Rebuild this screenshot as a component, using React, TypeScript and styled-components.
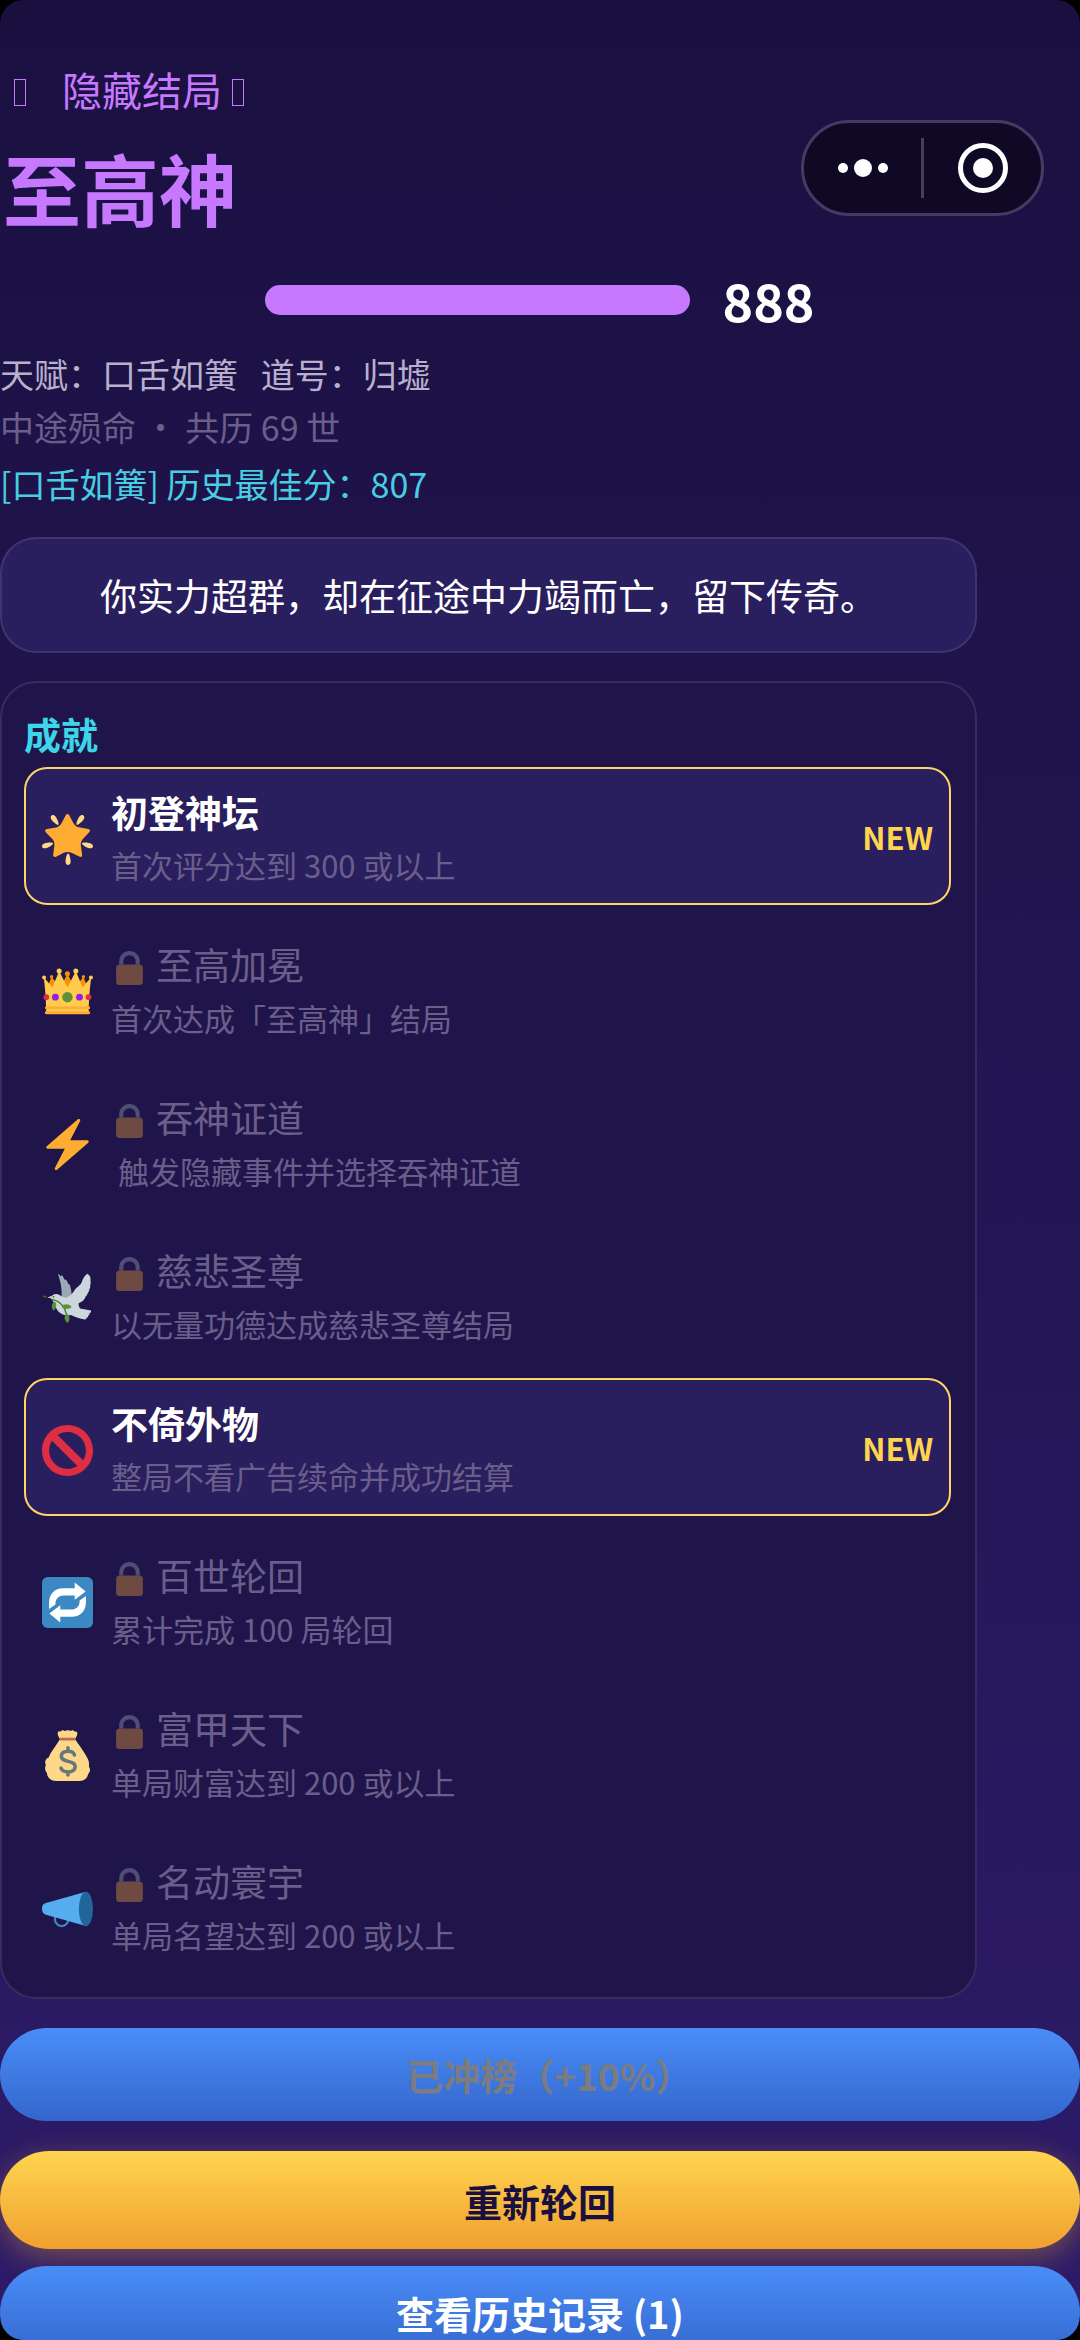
import React from "react";
import styled, { createGlobalStyle, css } from "styled-components";

const GlobalStyle = createGlobalStyle`
  *, *::before, *::after { box-sizing: border-box; }
  html, body { margin: 0; background: #000; }
  body, button {
    font-family: "Noto Sans CJK SC", "Noto Sans", sans-serif;
  }
`;

const Screen = styled.div`
  position: relative;
  height: 100vh;
  overflow: hidden;
  border-radius: 24px;
  background: linear-gradient(180deg, #1a1040 0%, #2d1b69 100%);
  color: #fff;
`;

const Scroller = styled.main`
  height: 100%;
  overflow-y: auto;
  scrollbar-width: none;
  padding-top: 59px;
`;

const Capsule = styled.div`
  position: absolute;
  z-index: 2;
  top: 120px;
  right: 36px;
  display: flex;
  align-items: center;
  width: 243px;
  height: 96px;
  border: 3px solid #453b62;
  border-radius: 48px;
  background: #0f0926;
`;

const CapsuleButton = styled.button`
  flex: 1;
  display: flex;
  align-items: center;
  justify-content: center;
  height: 100%;
  padding: 0;
  border: 0;
  background: none;
`;

const CapsuleDivider = styled.span`
  width: 3px;
  height: 60px;
  background: #453f5a;
`;

const EndingKind = styled.p`
  display: flex;
  align-items: baseline;
  margin: 0;
  padding-left: 14px;
  color: #c678ff;
  font-size: 40px;
  line-height: 60px;
`;

const KindLabel = styled.span`
  padding: 0 10px 0 36px;
`;

const Ornament = styled.span`
  width: 12px;
  height: 27px;
  border: 1px solid currentColor;
`;

const EndingName = styled.h1`
  margin: 0;
  padding-left: 3px;
  color: #c678ff;
  font-size: 78px;
  font-weight: 700;
  line-height: 136px;
`;

const ScoreRow = styled.div`
  display: flex;
  align-items: center;
  justify-content: center;
  gap: 32px;
  margin: 7px 0 9px;
`;

const ScoreBar = styled.div`
  width: 425px;
  height: 30px;
  border-radius: 15px;
  background: #c678ff;
`;

const ScoreValue = styled.strong`
  font-size: 52px;
  line-height: 76px;
`;

const Detail = styled.p<{ $color: string }>`
  margin: 0;
  color: ${(p) => p.$color};
  font-size: 34px;
  line-height: 53px;
  white-space: pre-wrap;
`;

const BestScore = styled(Detail)`
  margin-top: 4px;
`;

const panel = css`
  margin-right: 103px;
  border: 2px solid rgba(255, 255, 255, 0.1);
  border-radius: 36px;
`;

const Summary = styled.p`
  ${panel}
  margin-top: 27px;
  margin-bottom: 28px;
  padding: 28px 22px;
  background: #2a1f5e;
  font-size: 37px;
  line-height: 56px;
  text-align: center;
`;

const Achievements = styled.section`
  ${panel}
  padding: 24px 24px 22px 22px;
  background: #20154b;
`;

const SectionTitle = styled.h2`
  margin: 0 0 6px;
  color: #3dd5ea;
  font-size: 37px;
  font-weight: 700;
  line-height: 54px;
`;

const List = styled.ul`
  display: flex;
  flex-direction: column;
  gap: 14px;
  margin: 0;
  padding: 0;
  list-style: none;
`;

const Item = styled.li<{ $unlocked: boolean }>`
  display: flex;
  align-items: center;
  gap: 18px;
  padding: 14px 16px;
  border: 2px solid ${(p) => (p.$unlocked ? "#ffd666" : "transparent")};
  border-radius: 23px;
  background: ${(p) => (p.$unlocked ? "#2a1f5e" : "transparent")};
`;

const Emoji = styled.svg`
  flex: none;
  width: 51px;
  height: 51px;
  margin-top: 6px;
`;

const ItemBody = styled.div`
  flex: 1;
`;

const ItemTitle = styled.h3<{ $unlocked: boolean }>`
  display: flex;
  align-items: center;
  gap: 8px;
  margin: 0;
  color: ${(p) => (p.$unlocked ? "#fff" : "#6a5e8a")};
  font-size: 37px;
  font-weight: ${(p) => (p.$unlocked ? 700 : 400)};
  line-height: ${(p) => (p.$unlocked ? 58 : 59)}px;
`;

const LockIcon = styled.svg`
  width: 37px;
  height: 37px;
  margin-top: 4px;
  opacity: 0.35;
`;

const ItemText = styled.p`
  margin: 0;
  color: #6a5e8a;
  font-size: 31px;
  line-height: 48px;
  white-space: pre-wrap;
`;

const NewTag = styled.span`
  color: #ffd54f;
  font-size: 31px;
  font-weight: 700;
`;

const Actions = styled.div`
  display: flex;
  flex-direction: column;
  padding: 29px 0 40px;
`;

const BlueButton = styled.button`
  height: 93px;
  border: 0;
  border-radius: 47px;
  background: linear-gradient(180deg, #4a8df8 0%, #3366cc 100%);
  color: #fff;
  font-size: 38px;
  font-weight: 700;
  z-index: 1;

  &:disabled {
    color: #7c7c80;
    font-size: 37px;
  }
`;

/* Drops the blank half of a full-width closing mark so the label centres on its ink. */
const ClosingMark = styled.span`
  font-feature-settings: "halt";
`;

const GoldButton = styled.button`
  height: 98px;
  margin: 30px 0 17px;
  border: 0;
  border-radius: 49px;
  background: linear-gradient(180deg, #ffd54f 0%, #f0a030 100%);
  box-shadow: 0 8px 30px rgba(255, 180, 50, 0.35);
  color: #1a1040;
  font-size: 38px;
  font-weight: 700;
`;

type IconName = "star" | "crown" | "bolt" | "dove" | "ban" | "repeat" | "money" | "horn";

const repeatArrow =
  "M23.1 3.8L30.8 10.2L23.1 16V13H15.4C12 13 9.5 15.4 9.5 18.6V19.4L5 22.6V18.2C5 12 9 8 14.8 8H23.1Z";

const drawings: Record<IconName, React.ReactNode> = {
  star: (
    <>
      <path fill="#FFAC33" d="M28.84 17.638c-.987 1.044-1.633 3.067-1.438 4.493l.892 6.441c.197 1.427-.701 2.087-1.996 1.469l-5.851-2.796c-1.295-.62-3.408-.611-4.7.018l-5.826 2.842c-1.291.629-2.193-.026-2.007-1.452l.843-6.449c.186-1.427-.475-3.444-1.47-4.481l-4.494-4.688c-.996-1.037-.655-2.102.755-2.365l6.37-1.188c1.41-.263 3.116-1.518 3.793-2.789L16.762.956c.675-1.271 1.789-1.274 2.473-.009L22.33 6.66c.686 1.265 2.4 2.507 3.814 2.758l6.378 1.141c1.412.252 1.761 1.314.774 2.359l-4.456 4.72z" />
      <path fill="#FFD983" d="M9.783 2.181c1.023 1.413 2.446 4.917 1.717 5.447-.728.531-3.607-1.91-4.63-3.323-1.022-1.413-.935-2.668-.131-3.254.804-.587 2.02-.282 3.044 1.13zm19.348 2.124C28.109 5.718 25.23 8.16 24.5 7.627c-.729-.53.695-4.033 1.719-5.445C27.242.768 28.457.463 29.262 1.051c.803.586.89 1.841-.131 3.254zM16.625 33.291c-.001-1.746.898-5.421 1.801-5.421.897 0 1.798 3.675 1.797 5.42 0 1.747-.804 2.712-1.8 2.71-.994.002-1.798-.962-1.798-2.709zm16.179-9.262c-1.655-.539-4.858-2.533-4.579-3.395.277-.858 4.037-.581 5.69-.041 1.655.54 2.321 1.605 2.013 2.556-.308.95-1.469 1.42-3.124.88zM2.083 20.594c1.655-.54 5.414-.817 5.694.044.276.857-2.928 2.854-4.581 3.392-1.654.54-2.818.07-3.123-.88-.308-.95.354-2.015 2.01-2.556z" />
    </>
  ),
  crown: (
    <>
      <path fill="#F4900C" d="M14.174 17.075L6.75 7.594l-3.722 9.481zM17.938 5.534l-6.563 12.389H24.5zM21.826 17.075l7.424-9.481 3.722 9.481z" />
      <path fill="#FFCC4D" d="M28.669 15.19L23.887 3.523l-5.88 11.668-.007.003-.007-.004-5.88-11.668L7.331 15.19C4.197 10.833 1.28 8.042 1.28 8.042S3 20.75 3 33h30c0-12.25 1.72-24.958 1.72-24.958s-2.917 2.791-6.051 7.148z" />
      <circle fill="#5C913B" cx="17.957" cy="22" r="3.688" />
      <circle fill="#981CEB" cx="26.463" cy="22" r="2.412" />
      <circle fill="#DD2E44" cx="32.852" cy="22" r="1.986" />
      <circle fill="#981CEB" cx="9.45" cy="22" r="2.412" />
      <circle fill="#DD2E44" cx="3.061" cy="22" r="1.986" />
      <path fill="#FFAC33" d="M33 34H3c-.552 0-1-.447-1-1s.448-1 1-1h30c.553 0 1 .447 1 1s-.447 1-1 1zm0-3.486H3c-.552 0-1-.447-1-1s.448-1 1-1h30c.553 0 1 .447 1 1s-.447 1-1 1z" />
      <circle fill="#FFCC4D" cx="1.447" cy="8.042" r="1.407" />
      <circle fill="#F4900C" cx="6.75" cy="7.594" r="1.192" />
      <circle fill="#FFCC4D" cx="12.113" cy="3.523" r="1.784" />
      <circle fill="#FFCC4D" cx="34.553" cy="8.042" r="1.407" />
      <circle fill="#F4900C" cx="29.25" cy="7.594" r="1.192" />
      <circle fill="#FFCC4D" cx="23.887" cy="3.523" r="1.784" />
      <circle fill="#F4900C" cx="17.938" cy="5.534" r="1.784" />
    </>
  ),
  bolt: (
    <path fill="#FFAC33" d="M32.938 15.651C32.792 15.26 32.418 15 32 15H19.925L26.89 1.458c.219-.426.106-.947-.271-1.243C26.437.071 26.218 0 26 0c-.233 0-.466.082-.653.243L18 6.588 3.347 19.243c-.316.273-.43.714-.284 1.105S3.582 21 4 21h12.075L9.11 34.542c-.219.426-.106.947.271 1.243.182.144.401.215.619.215.233 0 .466-.082.653-.243L18 29.412l14.653-12.655c.317-.273.43-.714.285-1.106z" />
  ),
  dove: (
    <>
      <path fill="#99AAB5" d="M11.2 1.2c1 .3 1.6 1.2 2 2 .4-.6.7-1 1-.8 1 1 1.3 2 1.6 3 .5-.3 1-.2 1.3.3.8 1 1.2 1.9 1.4 2.8.6 0 1 .4 1.3 1 .8 2.5 1.2 5 1 7.5L20 20h-5.500c-.8-2.500-.6-4.500-.7-7-.2-4.500-1.400-8-2.600-11.800z" />
      <path fill="#CCD6DD" d="M32.200 1.300c1.700 1.200 2.400 3 2 5 .3 1 .2 2-.2 2.900.2 1.100 0 2.100-.6 3 0 1.100-.4 2-1.100 2.700-.2 1.100-.7 1.900-1.500 2.400-.7 2.400-2.500 3.900-4.900 4.700-.2 1.200.2 2.700 1 3.700l7.700 1.500c.2 1.100-.3 1.700-1.200 2 .4.900.1 1.400-.9 1.600.3.900-.1 1.400-1.100 1.400.1 1-.4 1.500-1.300 1.400-3.400-.5-6.500-1.800-9.700-3.200-3.100.7-6.500-.3-8.700-2.400-2-2-2.700-5.500-4.500-8.500-.7-1.100-1.600-1.300-3.200-1.400 1-.8 1.800-1 2.800-1 .8-1.300 2.200-1.800 3.700-1.600 2.300.4 3.600 2.300 6.200 2.700 2.400-.5 3.900-2.200 5.600-4.300 1.700-3 3.600-3.600 5.200-5.600C28.800 6.200 29 3 32.200 1.300z" />
      <path fill="none" stroke="#3E721D" strokeWidth="0.9" strokeLinecap="round" d="M1 17l2 .8M7 19.300c4 .8 7.500 3.200 9 7l1.500 4" />
      <path fill="#5C913B" d="M9 20.800c1.700 2 1.400 4.800-.8 6.400-1.700-1.800-2-4.500.8-6.400zM13.800 24.500c2-2.400 5.300-2.300 7.200.2-2.200 1.900-5.200 1.900-7.200-.2zM17.300 29c2.500 2 2.700 4.600.9 7-2.400-1.400-3.100-4.400-.9-7z" />
      <circle fill="#3E721D" cx="8.200" cy="17.500" r="0.600" />
    </>
  ),
  ban: (
    <path fill="#DD2E44" d="M18 0C8.059 0 0 8.059 0 18s8.059 18 18 18 18-8.059 18-18S27.941 0 18 0zm13 18c0 2.565-.753 4.950-2.035 6.965L11.036 7.036C13.050 5.753 15.435 5 18 5c7.180 0 13 5.821 13 13zM5 18c0-2.565.753-4.950 2.036-6.964l17.929 17.929C22.950 30.247 20.565 31 18 31c-7.179 0-13-5.820-13-13z" />
  ),
  repeat: (
    <>
      <rect fill="#3B88C3" width="36" height="36" rx="4" />
      <path fill="#fff" d={repeatArrow} />
      <path fill="#fff" transform="rotate(180 18 18)" d={repeatArrow} />
    </>
  ),
  money: (
    <>
      <path fill="#FDD888" d="M31.900 19.600c-1.500-3-4.300-7-7-10.800L23.300 6.500l1.200-2.300c1-2.200.2-3.800-1.400-3-.7-1.300-2-1.400-2.800-.5-.8-.8-3.200-.8-4.300 0-1-.9-2.400-.6-2.800.5-1.700-.8-2.700.5-1.800 2.800l1.300 2.500-1.400 2.200C8.600 12.800 6 16 4.700 19.400c-2.300.7-3 3.300-2 5.200-.8 2-.7 4 .7 5.500.4 3.500 2.800 5.900 6.500 5.900h16.400c3.400 0 5.600-1.800 6.200-4.800 1.600-1.600 1.800-3.700.6-5.500.3-2.300-.1-4.300-1.200-6.100z" />
      <rect fill="#BF6952" x="12.400" y="5.400" width="11.400" height="2" rx="1" />
      <path fill="none" stroke="#67757F" strokeWidth="2.500" strokeLinecap="round" strokeLinejoin="round" d="M18.300 12.500v2.500M18.300 29.500v2.200M22.900 17.600C22.400 15.800 20.500 15 18.300 15c-2.800 0-4.700 1.300-4.700 3.400 0 5 9.800 2.500 9.800 7.500 0 2.300-2.100 3.700-4.900 3.700-2.600 0-4.600-1-5.100-2.700" />
    </>
  ),
  horn: (
    <>
      <circle fill="none" stroke="#3B88C3" strokeWidth="1.500" cx="13.900" cy="25.600" r="4.800" />
      <path fill="#55ACEE" d="M31 6.200L2.200 14.300C.8 14.700 0 16 0 18s.8 3.700 2.200 4.200L31 30.400z" />
      <ellipse fill="#226699" cx="31" cy="18.300" rx="5" ry="12.200" />
    </>
  ),
};

interface Achievement {
  icon: IconName;
  title: string;
  text: string;
  unlocked: boolean;
}

const achievements: Achievement[] = [
  { icon: "star", title: "初登神坛", text: "首次评分达到 300 或以上", unlocked: true },
  { icon: "crown", title: "至高加冕", text: "首次达成「至高神」结局", unlocked: false },
  { icon: "bolt", title: "吞神证道", text: " 触发隐藏事件并选择吞神证道", unlocked: false },
  { icon: "dove", title: "慈悲圣尊", text: "以无量功德达成慈悲圣尊结局", unlocked: false },
  { icon: "ban", title: "不倚外物", text: "整局不看广告续命并成功结算", unlocked: true },
  { icon: "repeat", title: "百世轮回", text: "累计完成 100 局轮回", unlocked: false },
  { icon: "money", title: "富甲天下", text: "单局财富达到 200 或以上", unlocked: false },
  { icon: "horn", title: "名动寰宇", text: "单局名望达到 200 或以上", unlocked: false },
];

function Lock() {
  return (
    <LockIcon viewBox="0 0 36 36" aria-hidden="true">
      <path fill="#AAB8C2" d="M18 3C12.477 3 8 7.477 8 13v3h4v-3c0-3.313 2.686-6 6-6s6 2.687 6 6v3h4v-3c0-5.523-4.477-10-10-10z" />
      <path fill="#FFAC33" d="M31 33c0 1.657-1.343 3-3 3H8c-1.657 0-3-1.343-3-3V19c0-1.657 1.343-3 3-3h20c1.657 0 3 1.343 3 3v14z" />
    </LockIcon>
  );
}

function AchievementRow({ icon, title, text, unlocked }: Achievement) {
  return (
    <Item $unlocked={unlocked}>
      <Emoji viewBox="0 0 36 36" aria-hidden="true">
        {drawings[icon]}
      </Emoji>
      <ItemBody>
        <ItemTitle $unlocked={unlocked}>
          {!unlocked && <Lock />}
          {title}
        </ItemTitle>
        <ItemText>{text}</ItemText>
      </ItemBody>
      {unlocked && <NewTag>NEW</NewTag>}
    </Item>
  );
}

export default function App() {
  return (
    <Screen>
      <GlobalStyle />
      <Capsule>
        <CapsuleButton type="button" aria-label="更多">
          <svg width="52" height="20" viewBox="0 0 52 20" fill="#fff">
            <circle cx="6" cy="10" r="5" />
            <circle cx="26" cy="10" r="9" />
            <circle cx="46" cy="10" r="5" />
          </svg>
        </CapsuleButton>
        <CapsuleDivider />
        <CapsuleButton type="button" aria-label="关闭">
          <svg width="50" height="50" viewBox="0 0 50 50">
            <circle cx="25" cy="25" r="22.500" fill="none" stroke="#fff" strokeWidth="5" />
            <circle cx="25" cy="25" r="10" fill="#fff" />
          </svg>
        </CapsuleButton>
      </Capsule>
      <Scroller>
        <EndingKind>
          <Ornament aria-hidden="true" />
          <KindLabel>隐藏结局</KindLabel>
          <Ornament aria-hidden="true" />
        </EndingKind>
        <EndingName>至高神</EndingName>
        <ScoreRow>
          <ScoreBar />
          <ScoreValue>888</ScoreValue>
        </ScoreRow>
        <Detail $color="#b8b0cc">天赋：口舌如簧   道号：归墟</Detail>
        <Detail $color="#6a5e8a">中途殒命 ・ 共历 69 世</Detail>
        <BestScore $color="#48cde2">[口舌如簧] 历史最佳分：807</BestScore>
        <Summary>你实力超群，却在征途中力竭而亡，留下传奇。</Summary>
        <Achievements>
          <SectionTitle>成就</SectionTitle>
          <List>
            {achievements.map((item) => (
              <AchievementRow key={item.title} {...item} />
            ))}
          </List>
        </Achievements>
        <Actions>
          <BlueButton type="button" disabled>
            已冲榜（+10%<ClosingMark>）</ClosingMark>
          </BlueButton>
          <GoldButton type="button">重新轮回</GoldButton>
          <BlueButton type="button">查看历史记录 (1)</BlueButton>
        </Actions>
      </Scroller>
    </Screen>
  );
}
